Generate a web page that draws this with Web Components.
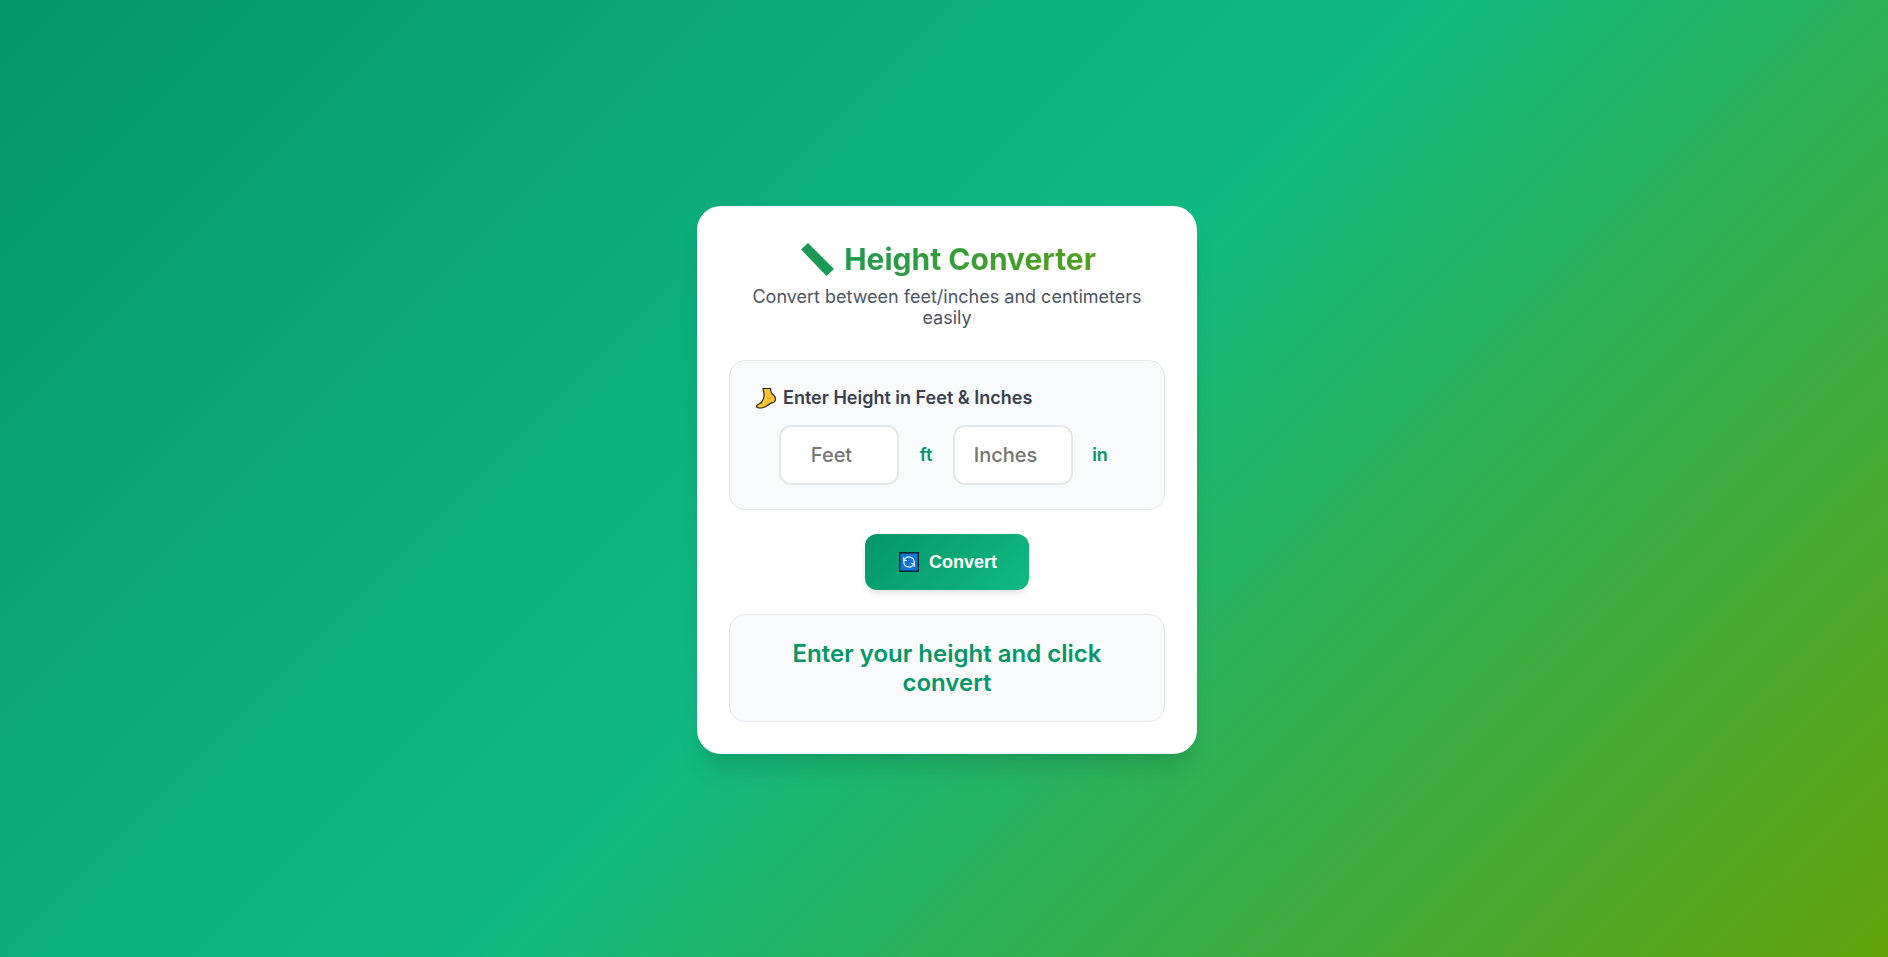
<!DOCTYPE html>
<html lang="en">
<head>
<meta charset="utf-8">
<meta name="viewport" content="width=device-width, initial-scale=1">
<title>Height Converter</title>
<style>
  body {
    margin: 0;
    box-sizing: border-box;
    min-height: 100vh;
    padding: 3px 0 0 6px;
    display: flex;
    align-items: center;
    justify-content: center;
    font-family: Inter, "Noto Sans", sans-serif;
    color: #374151;
    background: linear-gradient(135deg, #059669 0%, #10b981 50%, #65a30d 100%);
  }
</style>
</head>
<body>
<height-converter></height-converter>

<template id="converter-template">
  <style>
    :host {
      display: block;
      box-sizing: border-box;
      width: 100%;
      max-width: 500px;
      padding: 32px;
      border-radius: 24px;
      background: #fff;
      box-shadow: 0 20px 25px -5px rgba(0, 0, 0, 0.1), 0 10px 10px -5px rgba(0, 0, 0, 0.04);
      text-align: center;
    }
    header { margin-bottom: 32px; }
    h1 {
      margin: 0 0 6px;
      font-size: 30px;
      line-height: 42px;
      font-weight: 700;
      color: transparent;
      background: linear-gradient(135deg, #059669, #65a30d);
      -webkit-background-clip: text;
      background-clip: text;
    }
    h1 svg { width: 39px; height: 36px; vertical-align: -8px; }
    p { margin: 0; font-size: 18px; line-height: 21px; color: #4b5563; }
    convert-button { margin: 24px 0; }
    .fields { display: flex; justify-content: center; gap: 12px; }
    output {
      display: block;
      font-size: 24px;
      line-height: 29px;
      font-weight: 600;
      color: #059669;
    }
  </style>
  <header>
    <h1><svg viewBox="0 0 39 36" aria-hidden="true"><path d="M10 1 3 7.500 28.500 34 36 27Z" fill="#1a9955"/></svg> Height Converter</h1>
    <p>Convert between feet/inches and centimeters easily</p>
  </header>
  <panel-box>
    <panel-heading>Enter Height in Feet &amp; Inches</panel-heading>
    <div class="fields">
      <unit-field name="Feet">ft</unit-field>
      <unit-field name="Inches">in</unit-field>
    </div>
  </panel-box>
  <convert-button>Convert</convert-button>
  <panel-box><output>Enter your height and click convert</output></panel-box>
</template>

<template id="panel-template">
  <style>
    :host {
      display: block;
      padding: 24px;
      border: 1px solid #e5e7eb;
      border-radius: 16px;
      background: #f9fafb;
    }
  </style>
  <slot></slot>
</template>

<template id="heading-template">
  <style>
    :host { display: block; margin-bottom: 14px; text-align: left; }
    h2 {
      display: flex;
      align-items: center;
      gap: 5px;
      margin: 0;
      font-size: 18px;
      line-height: 26px;
      font-weight: 600;
    }
    svg { width: 24px; height: 24px; }
  </style>
  <h2>
    <svg viewBox="0 0 24 24" aria-hidden="true">
      <path d="M9 2.500h7.800c-.4 2.200-.3 3.700 1.200 5.200 1.800 1.300 3.400 2.600 3.500 4.800.2 2.600-1 3.800-3.500 4.400-4 1-4.600 3.600-8.600 4.600-2.300.5-5.400 1-6.600-.3-.7-1.300.3-2.300 1.800-2.900C8 16.600 9.800 14 10 9.800 10.200 7 9.400 5.500 9 2.500Z" fill="#fcc232" stroke="#26221c" stroke-width="1.200" stroke-linejoin="round"/>
      <path d="M13 12q1.500 1.500 3.500 0" fill="none" stroke="#e9a52b"/>
    </svg>
    <span><slot></slot></span>
  </h2>
</template>

<template id="field-template">
  <style>
    :host { display: flex; align-items: center; gap: 12px; }
    input {
      box-sizing: border-box;
      width: 120px;
      height: 60px;
      margin: 0;
      padding: 16px;
      border: 2px solid #e5e7eb;
      border-radius: 12px;
      background: #fff;
      font: 500 20px/24px Inter, "Noto Sans", sans-serif;
      color: #374151;
      text-align: center;
    }
    input::placeholder { color: #757575; }
    label {
      min-width: 30px;
      font-size: 18px;
      line-height: 24px;
      font-weight: 600;
      color: #059669;
    }
  </style>
  <input id="value" type="number" min="0">
  <label for="value"><slot></slot></label>
</template>

<template id="button-template">
  <style>
    :host { display: flex; justify-content: center; }
    button {
      display: inline-flex;
      align-items: center;
      gap: 8px;
      height: 56px;
      margin: 0;
      padding: 0 32px;
      border: 0;
      border-radius: 12px;
      background: linear-gradient(135deg, #059669, #10b981);
      box-shadow: 0 4px 6px rgba(0, 0, 0, 0.1);
      font: 700 18px/22px "Liberation Sans", Arial, sans-serif;
      color: #fff;
      cursor: pointer;
    }
    svg { width: 24px; height: 24px; }
  </style>
  <button type="button">
    <svg viewBox="0 0 24 24" aria-hidden="true">
      <path d="M2.700 2.700h18.600v18.600H2.700Z" fill="#0b78d7" stroke="#10212b" stroke-width="1.400"/>
      <g fill="none" stroke="#e8f4ff" stroke-width="1.200">
        <path d="M7.200 10.200a5.200 5.200 0 0 1 10 1.800v1.500M16.800 13.800a5.200 5.200 0 0 1-10-1.800v-1.500"/>
        <path d="M6.700 7.200v3.300H10M17.300 16.800v-3.300H14"/>
      </g>
    </svg>
    <slot></slot>
  </button>
</template>

<script>
  class TemplateElement extends HTMLElement {
    constructor() {
      super();
      const template = document.getElementById(this.constructor.templateId);
      this.attachShadow({ mode: "open" }).append(template.content.cloneNode(true));
    }
  }

  class PanelBox extends TemplateElement {
    static templateId = "panel-template";
  }

  class PanelHeading extends TemplateElement {
    static templateId = "heading-template";
  }

  class UnitField extends TemplateElement {
    static templateId = "field-template";
    connectedCallback() {
      this.shadowRoot.querySelector("input").placeholder = this.getAttribute("name");
    }
    get value() {
      return Number(this.shadowRoot.querySelector("input").value);
    }
  }

  class ConvertButton extends TemplateElement {
    static templateId = "button-template";
  }

  class HeightConverter extends TemplateElement {
    static templateId = "converter-template";
    connectedCallback() {
      const root = this.shadowRoot;
      root.querySelector("convert-button").addEventListener("click", () => {
        const [feet, inches] = [...root.querySelectorAll("unit-field")].map(f => f.value);
        root.querySelector("output").textContent = ((feet * 12 + inches) * 2.54).toFixed(2) + " cm";
      });
    }
  }

  customElements.define("panel-box", PanelBox);
  customElements.define("panel-heading", PanelHeading);
  customElements.define("unit-field", UnitField);
  customElements.define("convert-button", ConvertButton);
  customElements.define("height-converter", HeightConverter);
</script>
</body>
</html>
